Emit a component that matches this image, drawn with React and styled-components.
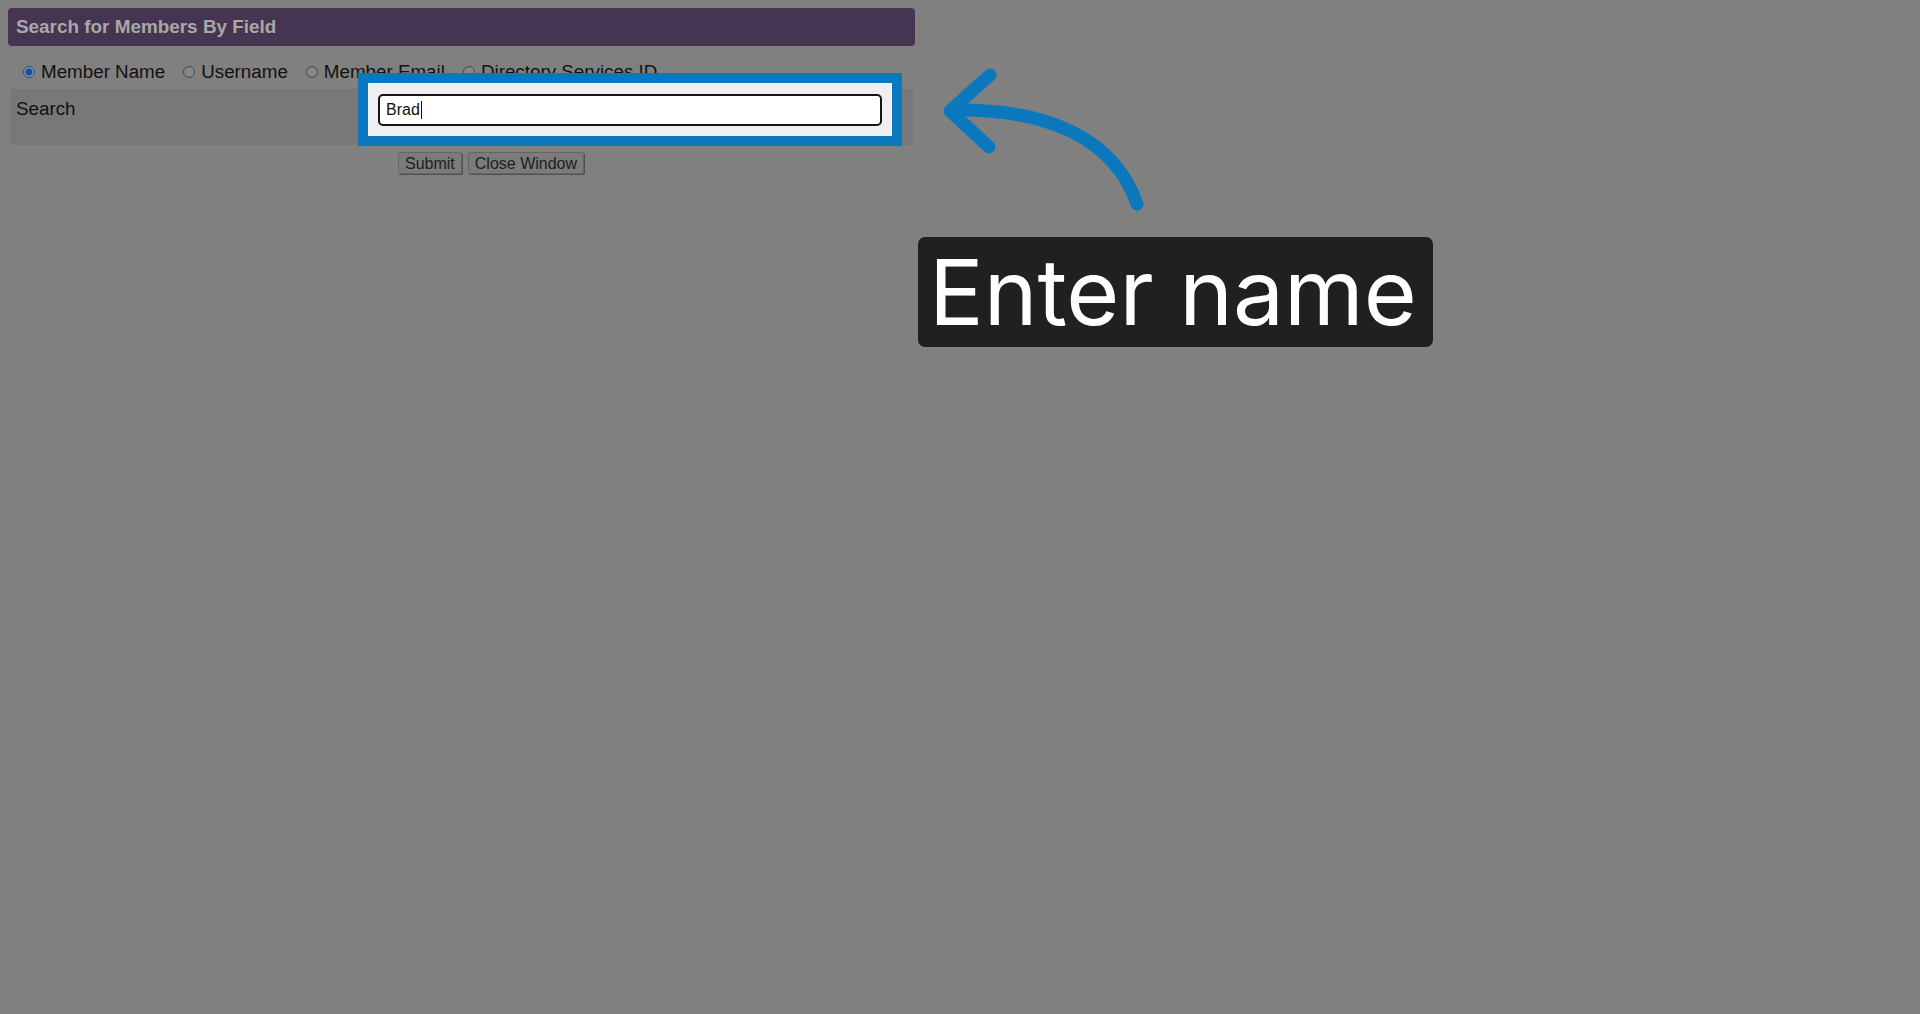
import React from "react";
import styled, { createGlobalStyle } from "styled-components";

const GlobalStyle = createGlobalStyle`
    html, body {
        margin: 0;
        padding: 0;
        background: #808080;
        font-family: "Liberation Sans", Arial, sans-serif;
    }
`;

const Page = styled.div`
    position: relative;
    width: 1920px;
    height: 1014px;
    padding: 8px;
    box-sizing: border-box;
    overflow: hidden;
`;

const Panel = styled.div`
    width: 907px;
`;

const Header = styled.div`
    height: 38px;
    background: #453552;
    border-radius: 4px;
    display: flex;
    align-items: center;
    padding-left: 8px;
    color: #a8a8a8;
    font-size: 18.9px;
    font-weight: bold;
`;

const RadioRow = styled.div`
    display: flex;
    align-items: center;
    height: 24px;
    margin-top: 14px;
    padding-left: 15px;
    gap: 18px;
`;

const RadioOption = styled.label`
    display: inline-flex;
    align-items: center;
    gap: 6px;
    font-size: 18.8px;
    color: #111;
`;

const RadioDot = styled.span`
    width: 12px;
    height: 12px;
    border-radius: 50%;
    box-sizing: border-box;
    border: 1px solid ${(p) => (p.checked ? "#1d55a6" : "#4a4a4a")};
    background: ${(p) =>
        p.checked ? "radial-gradient(circle, #1650a6 0 3.2px, #8a8c92 3.8px)" : "#858585"};
`;

const SearchBand = styled.div`
    display: grid;
    grid-template-columns: 348px 1fr;
    height: 56px;
    margin: 5px 2px 0 2px;
    background: #787878;
`;

const BandLabel = styled.div`
    padding: 9px 0 0 6px;
    font-size: 18.8px;
    line-height: 21px;
    color: #111;
`;

const InputCell = styled.div`
    position: relative;
`;

/* annotation spotlight over the search field */
const Spotlight = styled.div`
    position: absolute;
    left: 0;
    top: -16px;
    width: 544px;
    height: 73px;
    box-sizing: border-box;
    border: 10px solid #0b78bd;
    background: #efefef;
    padding: 11px 10px 0 10px;
`;

const FakeInput = styled.div`
    height: 32px;
    box-sizing: border-box;
    border: 2px solid #151515;
    border-radius: 5px;
    background: #fff;
    display: flex;
    align-items: center;
    padding-left: 6px;
    font-size: 16px;
    color: #111;
`;

const Caret = styled.span`
    display: inline-block;
    width: 1px;
    height: 18px;
    background: #111;
    margin-left: 1px;
`;

const ButtonRow = styled.div`
    display: flex;
    gap: 6px;
    margin-top: 7px;
    padding-left: 390px;
`;

const Button = styled.button`
    height: 22px;
    padding: 0 6px;
    font-family: "Liberation Sans", Arial, sans-serif;
    font-size: 16px;
    color: #1e1e1e;
    background: #7b7b7b;
    border: 1px solid #666;
    border-radius: 2px;
    box-shadow: 1px 1px 0 #505050;
    line-height: 19px;
`;

const Annotation = styled.div`
    position: absolute;
    left: 918px;
    top: 60px;
    display: flex;
    flex-direction: column;
`;

const ArrowSvg = styled.svg`
    display: block;
`;

const Callout = styled.div`
    margin-top: 7px;
    width: 515px;
    height: 110px;
    box-sizing: border-box;
    background: #202020;
    border-radius: 7px;
    display: flex;
    align-items: center;
    padding-left: 11px;
    color: #fff;
    font-family: Inter, "Noto Sans", sans-serif;
    font-size: 91px;
    font-weight: 400;
    white-space: nowrap;
`;

const options = [
    { label: "Member Name", checked: true },
    { label: "Username" },
    { label: "Member Email" },
    { label: "Directory Services ID" },
];

const App = () => {
    return (
        <>
            <GlobalStyle />
            <Page>
                <Panel>
                    <Header>Search for Members By Field</Header>
                    <RadioRow>
                        {options.map((o) => (
                            <RadioOption key={o.label}>
                                <RadioDot checked={o.checked} />
                                {o.label}
                            </RadioOption>
                        ))}
                    </RadioRow>
                    <SearchBand>
                        <BandLabel>Search</BandLabel>
                        <InputCell>
                            <Spotlight>
                                <FakeInput>
                                    Brad<Caret />
                                </FakeInput>
                            </Spotlight>
                        </InputCell>
                    </SearchBand>
                    <ButtonRow>
                        <Button>Submit</Button>
                        <Button>Close Window</Button>
                    </ButtonRow>
                </Panel>
                <Annotation>
                    <ArrowSvg width="240" height="170" viewBox="0 0 240 170">
                        <path
                            d="M 219 144 C 197 80, 132 48, 33 50"
                            fill="none"
                            stroke="#0b78bd"
                            strokeWidth="13"
                            strokeLinecap="round"
                        />
                        <polyline
                            points="72,15 32,51 71,87"
                            fill="none"
                            stroke="#0b78bd"
                            strokeWidth="13"
                            strokeLinecap="round"
                            strokeLinejoin="round"
                        />
                    </ArrowSvg>
                    <Callout>Enter name</Callout>
                </Annotation>
            </Page>
        </>
    );
};

export default App;
